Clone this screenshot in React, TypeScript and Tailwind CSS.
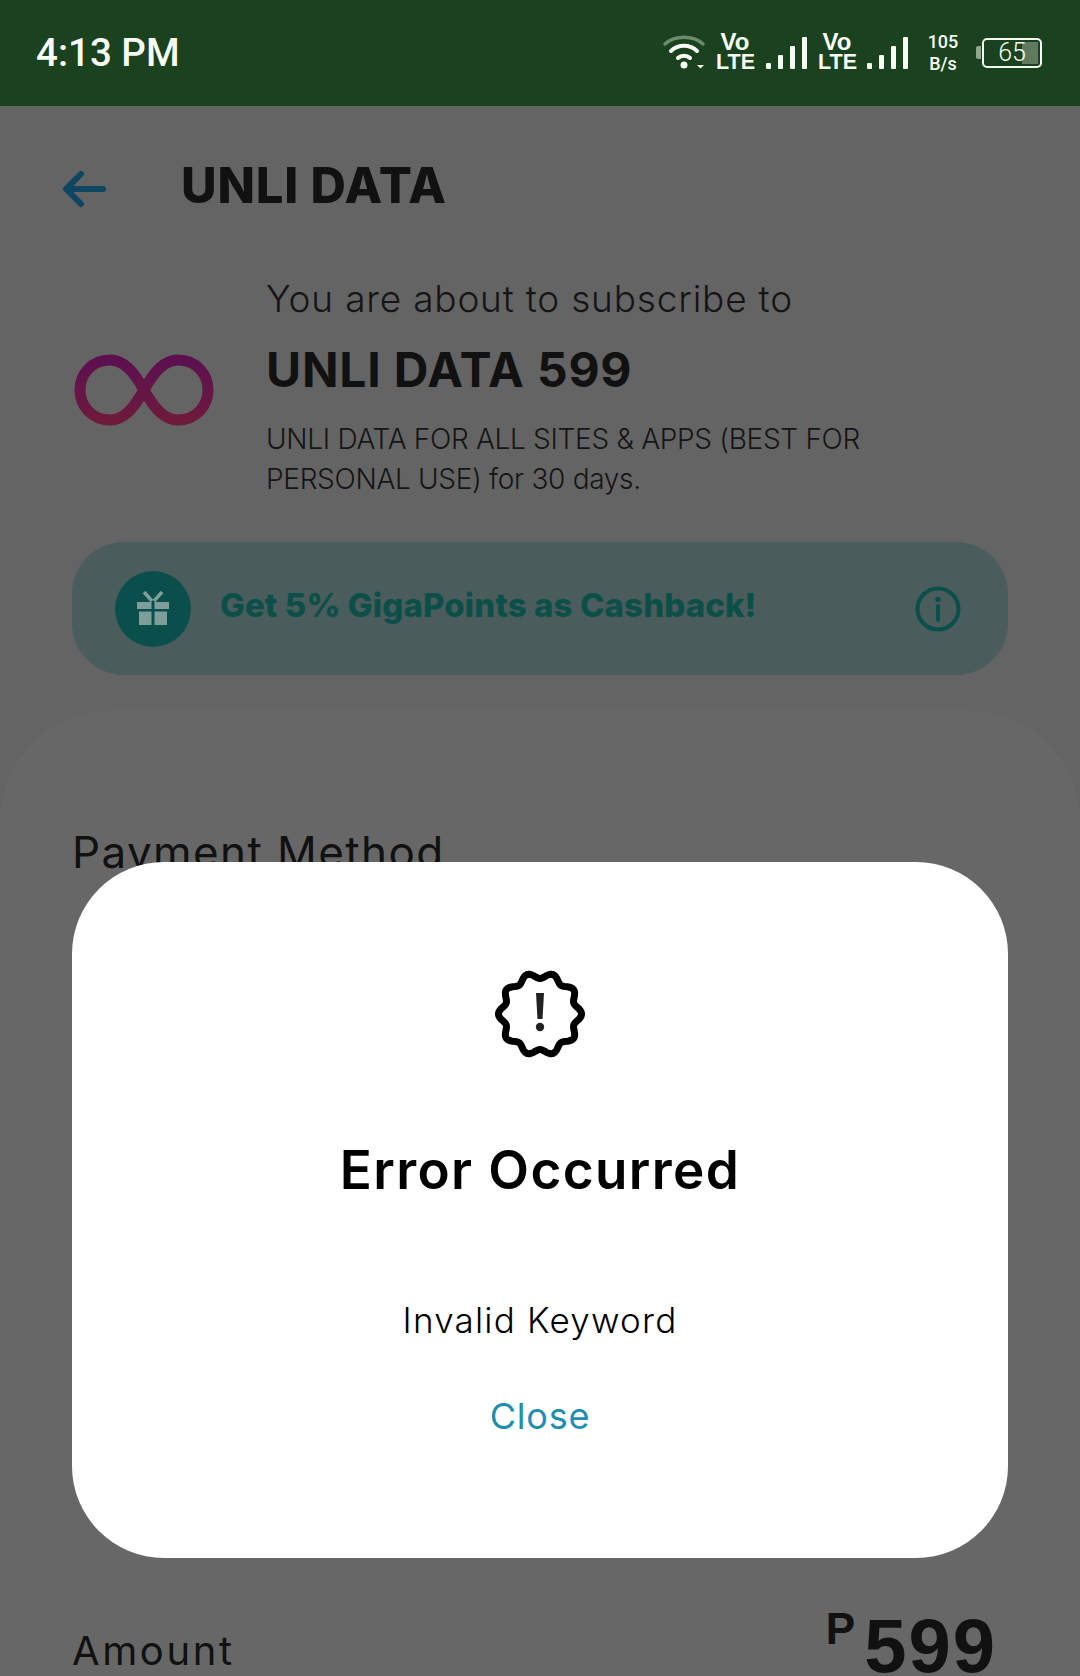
const badgePath = (() => {
  const pts: string[] = [];
  const n = 240;
  for (let i = 0; i <= n; i++) {
    const t = (i / n) * Math.PI * 2;
    const r = 38.5 + 3 * Math.cos(10 * t);
    pts.push(`${(46 + r * Math.cos(t)).toFixed(2)} ${(46 + r * Math.sin(t)).toFixed(2)}`);
  }
  return "M" + pts.join("L") + "Z";
})();

function Signal() {
  return (
    <div className="flex items-end gap-[7px] h-[32px]">
      <div className="w-[5px] h-[6px] bg-[#f6fbf4] rounded-[1px]" />
      <div className="w-[5px] h-[14px] bg-[#f6fbf4] rounded-[1px]" />
      <div className="w-[5px] h-[23px] bg-[#f6fbf4] rounded-[1px]" />
      <div className="w-[5px] h-[32px] bg-[#f6fbf4] rounded-[1px]" />
    </div>
  );
}

function VoLte() {
  return (
    <div className="w-[38px] -mt-[2px] text-center font-['Liberation_Sans',sans-serif] font-bold text-[#f6fbf4] text-[21.5px] leading-[20px] first-line:text-[24px]">
      Vo
      <br />
      LTE
    </div>
  );
}

function StatusBar() {
  return (
    <div className="h-[106px] bg-[#1a421e] flex items-center justify-between pl-[36px] pr-[38px] shrink-0">
      <span className="font-['Roboto',sans-serif] font-medium text-[38.5px] leading-none text-[#f6fbf4] mt-[1px]">4:13 PM</span>
      <div className="flex items-center -mt-[1px]">
        <svg width="48" height="36" viewBox="0 0 48 36" fill="none" className="mr-[6px] mt-[-1px]">
          <path d="M3 10C13 1 31 1 41 10" stroke="#6f8a6f" strokeWidth="3.5" strokeLinecap="round" />
          <path d="M9 17C16 10 28 10 35 17" stroke="#f6fbf4" strokeWidth="4" strokeLinecap="round" />
          <path d="M16 24C19 21 25 21 28 24" stroke="#f6fbf4" strokeWidth="4" strokeLinecap="round" />
          <circle cx="22" cy="31" r="3.5" fill="#f6fbf4" />
          <path d="M35 31H42L38.5 34.5Z" fill="#f6fbf4" />
        </svg>
        <VoLte />
        <div className="ml-[12px]"><Signal /></div>
        <div className="ml-[11px]"><VoLte /></div>
        <div className="ml-[11px]"><Signal /></div>
        <div className="ml-[19px] w-[32px] flex flex-col items-center font-['Roboto',sans-serif] font-medium text-[#f6fbf4] text-[18px] leading-[22px]">
          <span>105</span>
          <span>B/s</span>
        </div>
        <div className="ml-[17px] w-[5px] h-[13px] bg-[#8ea58e] rounded-l-[2px] mr-[1px]" />
        <div className="relative w-[60px] h-[30px] border-2 border-[#f6fbf4] rounded-[5px] flex items-center justify-center p-[2px]">
          <div className="flex-1" />
          <div className="w-[16px] h-full bg-[#5f7a5f]" />
          <span className="absolute inset-0 flex items-center justify-center font-['Roboto',sans-serif] text-[25px] leading-none text-[#f6fbf4] font-light">65</span>
        </div>
      </div>
    </div>
  );
}

export default function App() {
  return (
    <div className="relative w-[1080px] h-[1676px] overflow-hidden bg-[#646464] flex flex-col font-['Inter',sans-serif] text-[#111111]">
      <StatusBar />

      <div className="flex items-center pl-[62px] mt-[53px] h-[48px]">
        <svg width="44" height="38" viewBox="0 0 44 38" fill="none" className="mt-[12px]">
          <path d="M41 19H5M19 4L4 19L19 34" stroke="#0e4560" strokeWidth="6" strokeLinecap="round" strokeLinejoin="round" />
        </svg>
        <h1 className="ml-[75px] mt-[4px] text-[49px] leading-none font-extrabold tracking-[0.8px]">UNLI DATA</h1>
      </div>

      <div className="flex mt-[70px] pl-[74px]">
        <div className="w-[192px] shrink-0 flex items-start pt-[77px]">
          <svg width="140" height="72" viewBox="0 0 140 72" fill="none">
            <defs>
              <linearGradient id="inf" x1="0" y1="0" x2="0" y2="1">
                <stop offset="0" stopColor="#5c1050" />
                <stop offset="1" stopColor="#6e1a3c" />
              </linearGradient>
            </defs>
            <path
              d="M70 36C60 18 50 6 36 6C18 6 6 20 6 36C6 52 18 66 36 66C50 66 60 54 70 36C80 18 90 6 104 6C122 6 134 20 134 36C134 52 122 66 104 66C90 66 80 54 70 36Z"
              stroke="url(#inf)"
              strokeWidth="11"
            />
          </svg>
        </div>
        <div className="flex flex-col">
          <p className="text-[37px] leading-[44px] font-light tracking-[0.8px] text-[#151515]">You are about to subscribe to</p>
          <p className="mt-[24px] text-[48px] leading-[50px] font-bold tracking-[0.8px]">UNLI DATA 599</p>
          <p className="mt-[24px] w-[640px] text-[28px] leading-[40px] font-light tracking-[-0.3px] text-[#151515]">
            UNLI DATA FOR ALL SITES &amp; APPS (BEST FOR PERSONAL USE) for 30 days.
          </p>
        </div>
      </div>

      <div className="mx-[72px] mt-[43px] h-[133px] rounded-[52px] bg-[#4a5c5c] flex items-center pl-[43px] pr-[47px] shrink-0">
        <div className="w-[76px] h-[76px] rounded-full bg-[#0a4f4c] flex items-center justify-center shrink-0">
          <svg width="34" height="36" viewBox="0 0 34 36" fill="#7f9d99">
            <path d="M1 11H15.5V18H1ZM18.5 11H33V18H18.5ZM3 20.5H15.5V34H3ZM18.5 20.5H31V34H18.5Z" />
            <path d="M16 10L8 1M18 10L26 1" stroke="#7f9d99" strokeWidth="3.5" fill="none" />
          </svg>
        </div>
        <span className="ml-[29px] text-[33px] leading-none font-extrabold tracking-[0.1px] text-[#0c4f49] -mt-[6px]">Get 5% GigaPoints as Cashback!</span>
        <svg width="46" height="46" viewBox="0 0 46 46" fill="none" className="ml-auto">
          <circle cx="23" cy="23" r="20.5" stroke="#0a4f4c" strokeWidth="4" />
          <circle cx="23" cy="13.5" r="2.7" fill="#0a4f4c" />
          <path d="M23 20V34" stroke="#0a4f4c" strokeWidth="4" strokeLinecap="round" />
        </svg>
      </div>

      <div className="mt-[36px] flex-1 rounded-t-[110px] bg-[#676767] pt-[116px] px-[72px] flex flex-col">
        <p className="text-[44px] leading-[50px] font-normal tracking-[1.4px]">Payment Method</p>
        <div className="mt-auto flex items-end justify-between pr-[11px] -mb-[1px]">
          <span className="text-[40px] leading-[52px] tracking-[2.6px]">Amount</span>
          <div className="flex items-start font-['Liberation_Sans',sans-serif] font-bold">
            <span className="text-[44px] leading-[40px] mr-[9px] -mt-[6px]">P</span>
            <span className="text-[76px] leading-[62px] tracking-[2px]">599</span>
          </div>
        </div>
      </div>

      <div className="absolute left-[72px] top-[862px] w-[936px] h-[696px] rounded-[92px] bg-white flex flex-col items-center text-black">
        <svg width="92" height="92" viewBox="0 0 92 92" fill="none" className="mt-[106px]">
          <path d={badgePath} stroke="#000" strokeWidth="7" strokeLinejoin="round" />
          <path d="M42 25H50L48.5 51H43.5Z" fill="#222" />
          <circle cx="46" cy="59" r="4.2" fill="#222" />
        </svg>
        <h2 className="mt-[80px] text-[53px] leading-[60px] font-semibold tracking-[1.4px]">Error Occurred</h2>
        <p className="mt-[100px] text-[35px] leading-[40px] font-light tracking-[1.2px]">Invalid Keyword</p>
        <p className="mt-[56px] text-[36px] leading-[40px] font-normal tracking-[0.8px] text-[#1e8fb0]">Close</p>
      </div>
    </div>
  );
}
